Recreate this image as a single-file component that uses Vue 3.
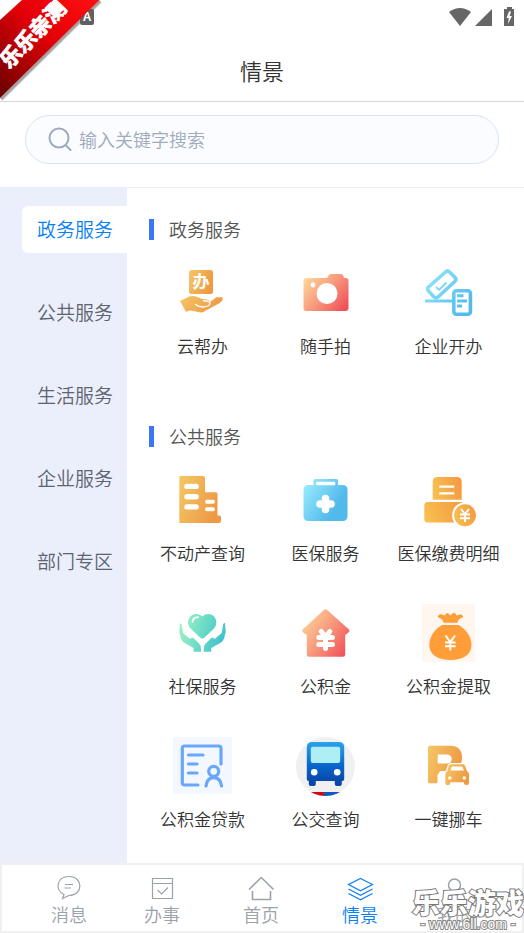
<script setup>
import { ref } from 'vue'

const keyword = ref('')
const categories = ['政务服务', '公共服务', '生活服务', '企业服务', '部门专区']
const current = ref('政务服务')

const sections = [
  {
    title: '政务服务',
    items: [
      { icon: 'hand', label: '云帮办' },
      { icon: 'camera', label: '随手拍' },
      { icon: 'register', label: '企业开办' },
    ],
  },
  {
    title: '公共服务',
    items: [
      { icon: 'building', label: '不动产查询' },
      { icon: 'medkit', label: '医保服务' },
      { icon: 'bill', label: '医保缴费明细' },
      { icon: 'care', label: '社保服务' },
      { icon: 'house', label: '公积金' },
      { icon: 'bag', label: '公积金提取' },
      { icon: 'loan', label: '公积金贷款' },
      { icon: 'bus', label: '公交查询' },
      { icon: 'parking', label: '一键挪车' },
    ],
  },
]

const tabs = [
  { icon: 'message', label: '消息' },
  { icon: 'task', label: '办事' },
  { icon: 'home', label: '首页' },
  { icon: 'layers', label: '情景', active: true },
  { icon: 'user', label: '我的' },
]
</script>

<template>
  <div class="page">
    <svg class="defs" width="0" height="0" aria-hidden="true">
      <defs>
        <linearGradient id="gOrange" x1="0" y1="0" x2="1" y2="0.4">
          <stop offset="0" stop-color="#f5c766" />
          <stop offset="1" stop-color="#ee9a45" />
        </linearGradient>
        <linearGradient id="gAmber" x1="0" y1="0.6" x2="1" y2="0.4">
          <stop offset="0" stop-color="#f8bf50" />
          <stop offset="1" stop-color="#f49a42" />
        </linearGradient>
        <linearGradient id="gRed" x1="0" y1="0.1" x2="1" y2="0.8">
          <stop offset="0" stop-color="#fedc9c" />
          <stop offset="0.55" stop-color="#f7947a" />
          <stop offset="1" stop-color="#f0525a" />
        </linearGradient>
        <linearGradient id="gBlue" x1="0" y1="0.1" x2="0.8" y2="0.6">
          <stop offset="0" stop-color="#9aedfc" />
          <stop offset="1" stop-color="#52b9ec" />
        </linearGradient>
        <linearGradient id="gLine" gradientUnits="userSpaceOnUse" x1="6" y1="12" x2="50" y2="44">
          <stop offset="0" stop-color="#90e6fb" />
          <stop offset="1" stop-color="#52b9ec" />
        </linearGradient>
        <linearGradient id="gGreen" gradientUnits="userSpaceOnUse" x1="6" y1="20" x2="53" y2="36">
          <stop offset="0" stop-color="#9df5c0" />
          <stop offset="1" stop-color="#3abfcd" />
        </linearGradient>
        <linearGradient id="gBus" x1="0" y1="0" x2="0" y2="1">
          <stop offset="0" stop-color="#2aa3ec" />
          <stop offset="0.6" stop-color="#0a66cb" />
          <stop offset="1" stop-color="#0749ab" />
        </linearGradient>
        <linearGradient id="gRibbon" x1="1" y1="0" x2="0" y2="1">
          <stop offset="0" stop-color="#ff1010" />
          <stop offset="0.45" stop-color="#e30008" />
          <stop offset="0.75" stop-color="#a00004" />
          <stop offset="1" stop-color="#680000" />
        </linearGradient>
        <clipPath id="busClip"><circle cx="29.5" cy="29.5" r="29.5" /></clipPath>
      </defs>
    </svg>

    <header class="header">
      <div class="status">
        <svg width="68" height="22" viewBox="0 0 68 22" fill="#666" aria-hidden="true">
          <path d="M0 6Q11-2 22 6L11 20Z" />
          <path d="M26 20L43 3V20Z" />
          <path d="M55 3h3V1h5v2h2v17H55Z" />
          <path d="M60 5.500 57.500 12h2.300L59 18l4-8h-2.300L62 5.500Z" fill="#fff" />
        </svg>
      </div>
      <h1 class="title">情景</h1>
    </header>

    <div class="search-area">
      <label class="search">
        <svg width="24" height="24" viewBox="0 0 24 24" fill="none" stroke="#a0aabd" stroke-width="2" stroke-linecap="round" aria-hidden="true">
          <circle cx="11" cy="11" r="9.500" />
          <path d="M18 18.500 22.500 23" />
        </svg>
        <input v-model="keyword" type="text" placeholder="输入关键字搜索" aria-label="搜索" />
      </label>
    </div>

    <div class="body">
      <nav class="side">
        <button
          v-for="c in categories"
          :key="c"
          type="button"
          class="cat"
          :class="{ on: c === current }"
          @click="current = c"
        >{{ c }}</button>
      </nav>

      <main class="content">
        <section v-for="s in sections" :key="s.title" class="section">
          <h2 class="section-title">{{ s.title }}</h2>
          <div class="grid">
            <a v-for="i in s.items" :key="i.label" href="#" class="service">
              <svg class="pic" viewBox="0 0 59 59" aria-hidden="true">
                <template v-if="i.icon === 'hand'">
                  <rect x="16" y="6" width="24" height="24" rx="2.500" fill="url(#gOrange)" />
                  <text x="28" y="24" class="glyph" text-anchor="middle">办</text>
                  <path fill="url(#gOrange)" d="M7 37C12 35.500 14 32 20 32c5 0 6 3 11 3.200 4 0 5.500 1 6 2.800l6-4.500q1.500-.8 2.500 0 4-1.500 4.300 1 .2 2-3.500 4.800L33 46.500q-3 2.500-7 1.800-6-2-9-1.800-2 .3-4 1.500Z" />
                  <path d="M22.500 40.500q3 2.500 8 2.500 6-.5 6.500-3.500.2-2.500-6.500-2.700" fill="none" stroke="#fff" stroke-width="1.400" stroke-linecap="round" />
                </template>

                <template v-else-if="i.icon === 'camera'">
                  <path fill="url(#gRed)" d="M10.500 14H31l2-3q.6-1 2-1h10q1.500 0 2 1.200l1.200 2.800H49.500q3 0 3 3V44q0 3-3 3h-39q-3 0-3-3V17q0-3 3-3Z" />
                  <circle cx="31" cy="29.500" r="10.500" fill="#fff" />
                  <circle cx="17" cy="21" r="2.400" fill="#fff" />
                </template>

                <g v-else-if="i.icon === 'register'" fill="none" stroke="url(#gLine)" stroke-width="3.600" stroke-linejoin="round">
                  <path d="M26.500 8Q28.500 6 30.500 8l5.500 5.500q1.800 2-.2 4L19 33q-2 1.800-4 0l-5.500-6q-1.800-2 0-4Z" />
                  <path d="M17 23l3 2.800 7.500-7.300" stroke-width="1.800" />
                  <path d="M6 37.010 33 37" stroke-width="3" />
                  <rect x="34.800" y="26.800" width="16.600" height="23.500" rx="2.500" />
                  <path d="M38 31.710 44.500 31.700M38 37.010 48 37M38 41.910 43 41.900" stroke-width="3" />
                </g>

                <template v-else-if="i.icon === 'building'">
                  <path fill="url(#gOrange)" d="M7.300 5H30q2 0 2 2V21.300H43q1.500 0 1.500 1.500V44.500h2q1.500 0 1.500 1.500v4q0 2-2 2H6.300V6q0-1 1-1Z" />
                  <g fill="#fff">
                    <rect x="11.300" y="12.700" width="14.500" height="5.400" rx="2.700" />
                    <rect x="11.300" y="23" width="14.500" height="5.400" rx="2.700" />
                    <rect x="11.300" y="33.200" width="14.500" height="5.400" rx="2.700" />
                    <rect x="32" y="28.700" width="10" height="4" rx="2" />
                    <rect x="32" y="36.300" width="10" height="4" rx="2" />
                  </g>
                </template>

                <template v-else-if="i.icon === 'medkit'">
                  <path fill="url(#gBlue)" fill-rule="evenodd" d="M19 8H40.500Q42 8 42 9.500V14h4.500q5 0 5 5V45q0 5-5 5h-34q-5 0-5-5V19q0-5 5-5h5V9.500Q17.500 8 19 8ZM21.500 10.700q-1.500 0-1.500 1.300v1q0 1.200 1.500 1.200H38q1.300 0 1.300-1.200v-1q0-1.300-1.300-1.300Z" />
                  <path d="M29.500 27.500v11M24 33h11" stroke="#fff" stroke-width="7.600" stroke-linecap="round" />
                </template>

                <template v-else-if="i.icon === 'bill'">
                  <path fill="url(#gAmber)" d="M13.700 28.700V11q0-5 5-5h19q5 0 5 5V28.700Z" />
                  <rect x="5.300" y="31" width="40" height="20.500" rx="3.500" fill="url(#gAmber)" />
                  <path d="M20.300 15.700h15M20.300 22.300h15" stroke="#fff" stroke-width="2.300" />
                  <circle cx="46" cy="44.300" r="13" fill="#fff" />
                  <circle cx="46" cy="44.300" r="11" fill="url(#gAmber)" />
                  <path d="M42 38l4 5 4-5M46 43v8M41 43.500h10M41 47.300h10" fill="none" stroke="#fff" stroke-width="2" />
                </template>

                <g v-else-if="i.icon === 'care'" fill="url(#gGreen)">
                  <path d="M29.300 12.500C33 8.500 39 9.500 41.500 13c3 4.500 2 9-1 12L31.500 33.500q-2.200 2-4.400 0L18 25c-3.500-3.500-3.800-8.500-1.200-12C20 9 26 9 29.300 12.500Z" />
                  <path d="M19.500 18q.5-4.500 5.500-4.800" fill="none" stroke="#fff" stroke-width="1.800" stroke-linecap="round" />
                  <path d="M7 19.500q1.500-.5 1.700 1.500L10 29l7 6q2-2.500 4.500 0l4.500 4.500q2 2 2 5v3.300h-7.500V44L11 38.500q-2-1.200-3-4L6.300 28Z" />
                  <path d="M52 19q-1.600-.5-1.900 1.500L48.700 29l-7 6q-2-2.500-4.500 0l-4.500 4.500q-2 2-2 5v3.300h7.500V44L48 38.500q2-1.200 3-4l1.700-6.500Z" />
                </g>

                <template v-else-if="i.icon === 'house'">
                  <path fill="url(#gRed)" d="M27.800 6q1.700-1.300 3.400 0L53 25.500q1.200 1.500-.2 2.700L49.200 31V50.500q0 2.200-2.200 2.200H13q-2.200 0-2.200-2.200V31L6.800 28.200q-1.300-1.200-.2-2.700Z" />
                  <path d="M25.300 27.500l4.200 5.500 4.300-5.500M29.500 33v11.500M22.800 33.500h13.600M22.800 40.500h13.600" fill="none" stroke="#fff" stroke-width="5" stroke-linecap="round" stroke-linejoin="round" />
                </template>

                <template v-else-if="i.icon === 'bag'">
                  <rect x="3" width="53" height="58" fill="#fff6f0" />
                  <path fill="#ff9d38" d="M24.500 18.800Q24 15 19.500 13.500q-1-.5-.6-1.500 1.500-2.500 4-1.500l3 1q1-2.800 3-2.500l2.500 2.500Q34 8 36 9l1.500 2.500 3-1q3-.5 3.600 2 0 1-1 1.300Q39 15 38.500 18.800Z" />
                  <path fill="#ff9d38" d="M23 21H39.500C47 25 52.500 33 52.500 41c0 10-9 15-21 15s-21.200-5-21.200-15C10.300 33 15.500 25 23 21Z" />
                  <path d="M26.500 31.500l4.800 6.500 4.800-6.500M31.300 38v8.500M26 38.500h10.600M26 42.300h10.600" fill="none" stroke="#fff" stroke-width="2" />
                </template>

                <template v-else-if="i.icon === 'loan'">
                  <rect width="59" height="57" fill="#f3f8ff" />
                  <path d="M48 27V11.500Q48 9 45.500 9H11.800Q9.300 9 9.300 11.500v34Q9.300 48 11.800 48H25M15.500 18H30M15.500 27H24M15.500 36H24M33 49q1-8.300 7.800-8.300T48.500 49" fill="none" stroke="#68a7fc" stroke-width="3.200" stroke-linecap="round" />
                  <circle cx="40.700" cy="34.300" r="5" fill="none" stroke="#68a7fc" stroke-width="3.200" />
                </template>

                <g v-else-if="i.icon === 'bus'" clip-path="url(#busClip)">
                  <rect width="59" height="59" fill="#f0f0f0" />
                  <rect y="55" width="28" height="4" fill="#c90d18" />
                  <rect x="28" y="55" width="31" height="4" fill="#1159bd" />
                  <path fill="#0749ab" d="M12.800 40h7v7q0 2-2 2h-3q-2 0-2-2ZM38.800 40h7v7q0 2-2 2h-3q-2 0-2-2Z" />
                  <path fill="url(#gBus)" d="M16 5H43q5.200 0 5.200 5.500V42q0 2-2 2H12.800q-2 0-2-2V10.500Q10.800 5 16 5Z" />
                  <rect x="14.800" y="9.700" width="29.400" height="16.200" rx="2" fill="#aeeef5" />
                  <circle cx="18.200" cy="35.300" r="3.300" fill="#fff" />
                  <circle cx="41.200" cy="35.300" r="3.300" fill="#fff" />
                </g>

                <template v-else>
                  <path fill="url(#gOrange)" fill-rule="evenodd" d="M10.500 8.700H31Q43 9 43 20.500 43 34 31 34H21L18.500 38v7q0 1.300-1.300 1.300H10.500Q9 46.300 9 44.800V10.200Q9 8.700 10.500 8.700ZM18.700 17.500V26.500H28q4.700-.5 4.700-4.500t-4.700-4.500Z" />
                  <path stroke="#fff" stroke-width="2.600" paint-order="stroke" fill="url(#gOrange)" d="M31.500 27.300H44q1.500 0 2 1.500L48 34q2 1 2 3.500V46q0 2-2 2h-1q-2 0-2-2v-.8H31.300V46q0 2-2 2h-1q-2 0-2-2V37.500q0-2.500 2-3.500l1.500-5.200q.5-1.500 1.700-1.500Z" />
                  <path d="M32.800 29.500h10.500l1.600 4H31.500Z" fill="#fff" />
                  <circle cx="30.800" cy="41" r="1.700" fill="#fff" />
                  <circle cx="45.300" cy="41" r="1.700" fill="#fff" />
                </template>
              </svg>
              <span>{{ i.label }}</span>
            </a>
          </div>
        </section>
      </main>
    </div>

    <nav class="tabs">
      <a v-for="t in tabs" :key="t.label" href="#" class="tab" :class="{ on: t.active }">
        <svg width="28" height="28" viewBox="0 0 28 28" fill="none" stroke="currentColor" stroke-width="1.200" aria-hidden="true">
          <path v-if="t.icon === 'message'" d="M7.500 24.500 9 20.500C-.5 16 1.500 2.500 14 2.500c14.500 0 14.500 19 0 19q-2.500 1-6.500 3ZM10 10.500h8M9.500 14h6.500" />
          <path v-else-if="t.icon === 'task'" d="M4.500 4.500h20v20h-20ZM4.500 9.500h20M9.500 16l4 4 6.500-6.500" />
          <g v-else-if="t.icon === 'home'" stroke-width="1.600">
            <path d="M2 15.500 14.300 3.500 26.500 15.500" />
            <path d="M5.500 17v8.500h18V17" />
          </g>
          <path v-else-if="t.icon === 'layers'" d="M14.500 4.500 26.500 10.500 14.500 16.800 2.500 10.500ZM2.500 15 14.500 21.300 26.500 15M2.500 19.500 14.500 25.800 26.500 19.500" />
          <g v-else stroke-width="1.500">
            <circle cx="13.500" cy="11" r="6" />
            <path d="M2.500 27q1.500-9.500 11-10 9.500.5 11 10" />
          </g>
        </svg>
        <span>{{ t.label }}</span>
      </a>
    </nav>

    <svg class="ribbon" width="104" height="104" viewBox="0 0 104 104">
      <path d="M100 1 1 99" stroke="#000" stroke-opacity=".15" stroke-width="5" />
      <path d="M100 1 1 99" stroke="#000" stroke-opacity=".25" stroke-width="3" />
      <rect x="80" y="9" width="14" height="16" rx="2" fill="#606060" />
      <text x="87" y="21" class="badge" text-anchor="middle">A</text>
      <path d="M22 0H99.500L0 98V20Z" fill="url(#gRibbon)" />
      <text class="ribbon-text" x="32" y="33" text-anchor="middle" dominant-baseline="central" transform="rotate(-46 32 33)">乐乐亲测</text>
    </svg>

    <div class="mark">
      <strong>乐乐游戏</strong>
      <span>- www.6ll.com -</span>
    </div>
  </div>
</template>

<style>
body {
  margin: 0;
  background: #fff;
}
</style>

<style scoped>
.page {
  position: relative;
  display: flex;
  flex-direction: column;
  min-height: 100vh;
  overflow: hidden;
  background: #fff;
  font-family: "Noto Sans CJK SC", sans-serif;
  font-weight: 350;
  color: #333;
}
.page *,
.page {
  box-sizing: border-box;
}
.defs {
  position: absolute;
}
.header {
  height: 102px;
  border-bottom: 1px solid #d8d8d8;
}
.status {
  display: flex;
  justify-content: flex-end;
  height: 48px;
  padding: 6px 7px 0 0;
}
.title {
  margin: 0;
  text-align: center;
  font-size: 22px;
  line-height: 44px;
  font-weight: inherit;
}
.search-area {
  padding: 13px 25px 23px;
  border-bottom: 1px solid #e8eefa;
}
.search {
  display: flex;
  align-items: center;
  gap: 7px;
  height: 49px;
  padding: 0 22px 2px;
  border: 1px solid #d6e3fd;
  border-radius: 25px;
  background: #fafcff;
}
.search svg {
  flex: none;
}
.search input {
  flex: 1;
  min-width: 0;
  padding: 0;
  border: 0;
  outline: 0;
  background: none;
  font: inherit;
  font-size: 18px;
  line-height: 28px;
}
.search input::placeholder {
  color: #a0aabd;
  opacity: 1;
}
.body {
  flex: 1;
  display: flex;
}
.side {
  flex: none;
  display: flex;
  flex-direction: column;
  align-items: flex-end;
  gap: 36px;
  width: 127px;
  padding-top: 18px;
  background: #eaeffb;
}
.cat {
  width: 105px;
  height: 47px;
  padding: 0 0 2px 15px;
  border: 0;
  border-radius: 6px 0 0 6px;
  background: none;
  font: inherit;
  font-size: 19px;
  text-align: left;
  white-space: nowrap;
  color: #5d6370;
}
.cat.on {
  background: #fff;
  color: #0a7ff5;
}
.content {
  flex: 1;
  display: flex;
  flex-direction: column;
  gap: 64px;
  padding: 27px 14px 28px;
}
.section-title {
  display: flex;
  align-items: center;
  gap: 15px;
  margin: 0 0 21px;
  padding-left: 8px;
  font-size: 18px;
  line-height: 28px;
  font-weight: inherit;
  color: #555;
}
.section-title::before {
  content: "";
  width: 5px;
  height: 21px;
  background: #3b77f5;
}
.grid {
  display: grid;
  grid-template-columns: repeat(3, 1fr);
  row-gap: 39px;
}
.service {
  display: flex;
  flex-direction: column;
  align-items: center;
  gap: 11px;
  font-size: 17px;
  line-height: 24px;
  white-space: nowrap;
  color: #333;
  text-decoration: none;
}
.pic {
  width: 59px;
  height: 59px;
}
.glyph {
  font-size: 17px;
  font-weight: 700;
  fill: #fff;
}
.tabs {
  display: grid;
  grid-template-columns: 94fr 92fr 106fr 92fr 98fr;
  padding: 9px 18px 5px 20px;
  border: 2px solid #f0f0f0;
}
.tab {
  display: flex;
  flex-direction: column;
  align-items: center;
  font-size: 18px;
  line-height: 24px;
  color: #9aa2aa;
  text-decoration: none;
}
.tab.on {
  color: #0a7ff5;
}
.ribbon {
  position: absolute;
  top: 0;
  left: 0;
  overflow: visible;
}
.badge {
  font: 700 12px "Liberation Sans", sans-serif;
  fill: #fff;
}
.ribbon-text {
  font-size: 21px;
  font-weight: 700;
  fill: #fff;
  stroke: #fff;
  stroke-width: 1px;
}
.mark {
  position: absolute;
  right: 0;
  bottom: 2px;
  display: flex;
  flex-direction: column;
  align-items: center;
  color: #fff;
  paint-order: stroke;
  -webkit-text-stroke: 2px #777;
}
.mark strong {
  font-size: 28px;
  line-height: 30px;
  font-weight: 900;
}
.mark span {
  font-family: "Liberation Sans", sans-serif;
  font-size: 14px;
  line-height: 14px;
  -webkit-text-stroke: 2px #888;
}
</style>
